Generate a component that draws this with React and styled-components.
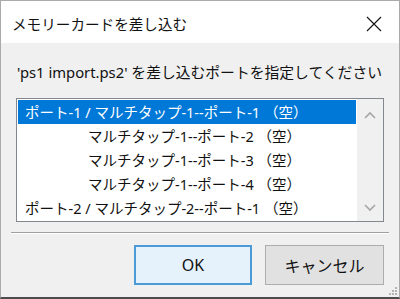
import React from 'react';
import styled, { createGlobalStyle } from 'styled-components';

const rows = [
  { label: 'ポート-1 / マルチタップ-1--ポート-1 （空）', indent: false, selected: true },
  { label: 'マルチタップ-1--ポート-2 （空）', indent: true },
  { label: 'マルチタップ-1--ポート-3 （空）', indent: true },
  { label: 'マルチタップ-1--ポート-4 （空）', indent: true },
  { label: 'ポート-2 / マルチタップ-2--ポート-1 （空）', indent: false },
];

const Chevron = ({ up }) => (
  <svg width="12" height="8" viewBox="0 0 12 8">
    <polyline
      points={up ? '1,7 6,2 11,7' : '1,1 6,6 11,1'}
      fill="none"
      stroke="#a6a6a6"
      strokeWidth="1.6"
    />
  </svg>
);

export default function App() {
  return (
    <>
      <GlobalStyle />
      <Window>
        <TitleBar>
          <Title>メモリーカードを差し込む</Title>
          <CloseButton>
            <svg width="16" height="16" viewBox="0 0 16 16">
              <path d="M1 1 L15 15 M15 1 L1 15" stroke="#111" strokeWidth="1.1" />
            </svg>
          </CloseButton>
        </TitleBar>
        <Body>
          <Prompt>'ps1 import.ps2' を差し込むポートを指定してください</Prompt>
          <ListBox>
            <List>
              {rows.map((r) => (
                <Row key={r.label} $indent={r.indent} $selected={r.selected}>
                  {r.label}
                </Row>
              ))}
            </List>
            <ScrollBar>
              <Chevron up />
              <Chevron />
            </ScrollBar>
          </ListBox>
          <Separator />
          <Buttons>
            <Button $primary>OK</Button>
            <Button>キャンセル</Button>
          </Buttons>
        </Body>
        <Grip>
          <svg width="10" height="10" viewBox="0 0 10 10">
            {[
              [7, 1], [4, 4], [7, 4], [1, 7], [4, 7], [7, 7],
            ].map(([x, y]) => (
              <rect key={`${x}-${y}`} x={x} y={y} width="2" height="2" fill="#b4b4b4" />
            ))}
          </svg>
        </Grip>
      </Window>
    </>
  );
}

const GlobalStyle = createGlobalStyle`
  html, body {
    margin: 0;
    padding: 0;
    width: 400px;
    height: 299px;
    overflow: hidden;
  }
  * { box-sizing: border-box; }
`;

const Window = styled.div`
  position: relative;
  width: 400px;
  height: 299px;
  border: 1px solid #aaaaaa;
  border-bottom: 2px solid #4c4c4c;
  background: #f0f0f0;
  display: flex;
  flex-direction: column;
  font-family: "Noto Sans", "Noto Sans CJK JP", sans-serif;
  color: #000;
`;

const TitleBar = styled.div`
  height: 42px;
  background: #fff;
  display: flex;
  align-items: center;
  justify-content: space-between;
  padding: 0 10px 0 11px;
`;

const Title = styled.div`
  font-size: 14.6px;
  margin-top: 2px;
  color: #111;
`;

const CloseButton = styled.div`
  width: 30px;
  height: 30px;
  display: flex;
  align-items: center;
  justify-content: center;
  margin-top: 4px;
`;

const Body = styled.div`
  flex: 1;
  display: flex;
  flex-direction: column;
  padding: 18px 15px 0 15px;
`;

const Prompt = styled.div`
  font-size: 14.8px;
  line-height: 22px;
  padding-left: 1px;
  white-space: nowrap;
  color: #111;
`;

const ListBox = styled.div`
  margin-top: 15px;
  height: 124px;
  border: 1px solid #828790;
  background: #fff;
  display: flex;
`;

const List = styled.div`
  flex: 1;
  padding: 1px;
  display: flex;
  flex-direction: column;
`;

const Row = styled.div`
  height: 24px;
  line-height: 25px;
  font-size: 14.5px;
  white-space: nowrap;
  padding-left: ${(p) => (p.$indent ? '70px' : '7px')};
  background: ${(p) => (p.$selected ? '#0078d7' : 'transparent')};
  color: ${(p) => (p.$selected ? '#fff' : '#111')};
`;

const ScrollBar = styled.div`
  width: 26px;
  background: #f0f0f0;
  display: flex;
  flex-direction: column;
  align-items: center;
  justify-content: space-between;
  padding: 12px 0 9px 0;
`;

const Separator = styled.div`
  margin: 10px -5px 0 -5px;
  height: 2px;
  border-top: 1px solid #a0a0a0;
  border-bottom: 1px solid #ffffff;
`;

const Buttons = styled.div`
  display: flex;
  justify-content: flex-end;
  gap: 13px;
  margin-top: 11px;
`;

const Button = styled.div`
  width: ${(p) => (p.$primary ? '118px' : '119px')};
  height: 40px;
  display: flex;
  align-items: center;
  justify-content: center;
  font-size: 16px;
  color: #111;
  background: ${(p) => (p.$primary ? '#e5f1fb' : '#e1e1e1')};
  border: ${(p) => (p.$primary ? '2px solid #4d9bd6' : '1px solid #adadad')};
`;

const Grip = styled.div`
  position: absolute;
  right: 1px;
  bottom: 1px;
  line-height: 0;
`;
